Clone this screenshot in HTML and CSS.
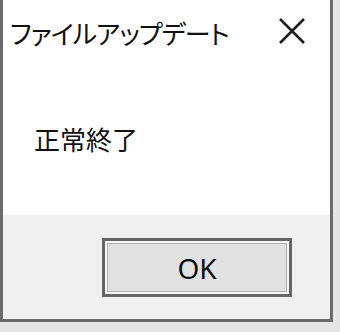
FILE: index.html
```html
<!DOCTYPE html>
<html lang="ja">
<head>
    <meta charset="UTF-8">
    <meta name="viewport" content="width=device-width, initial-scale=1.0">
    <title>ファイルアップデート</title>
    <link rel="stylesheet" href="styles.css">
</head>
<body>
    <div class="dialog">
        <div class="titlebar">
            <span class="title">ファイルアップデート</span>
            <span class="close">
                <svg width="28" height="26" viewBox="0 0 28 26">
                    <path d="M2 1 L26 25 M26 1 L2 25" stroke="#1e1e1e" stroke-width="2.6" fill="none"/>
                </svg>
            </span>
        </div>
        <div class="message">正常終了</div>
        <div class="footer">
            <button class="ok">OK</button>
        </div>
    </div>
</body>
</html>
```

FILE: styles.css
```css
* {
    box-sizing: border-box;
}
html, body {
    margin: 0;
    height: 100%;
}
body {
    background-color: #e6e6e6;
    font-family: "Noto Sans CJK JP", "Noto Sans", sans-serif;
}
.dialog {
    width: 333px;
    height: 322px;
    background-color: #fff;
    border: 3px solid #6a6a6a;
    border-top: 0;
    display: flex;
    flex-direction: column;
}
.titlebar {
    height: 62px;
    display: flex;
    align-items: center;
    justify-content: space-between;
    padding: 0 24px 0 7px;
}
.title {
    font-size: 26px;
    font-feature-settings: "palt";
    letter-spacing: -1px;
    color: #111;
    margin-top: 2px;
}
.close {
    display: flex;
}
.message {
    flex: 1;
    padding: 0 0 0 31px;
    display: flex;
    align-items: center;
    font-size: 26px;
    color: #111;
}
.footer {
    height: 104px;
    background-color: #f0f0f0;
    display: flex;
    align-items: center;
    justify-content: flex-end;
    padding-right: 38px;
}
.ok {
    width: 190px;
    height: 59px;
    background-color: #e1e1e1;
    border: 3px solid #656565;
    box-shadow: inset 0 0 0 2px #f7f7f7, inset 0 0 0 3px #adadad;
    font-family: "Noto Sans", sans-serif;
    font-size: 28px;
    color: #111;
    padding: 0;
    margin-top: 1px;
}
```
